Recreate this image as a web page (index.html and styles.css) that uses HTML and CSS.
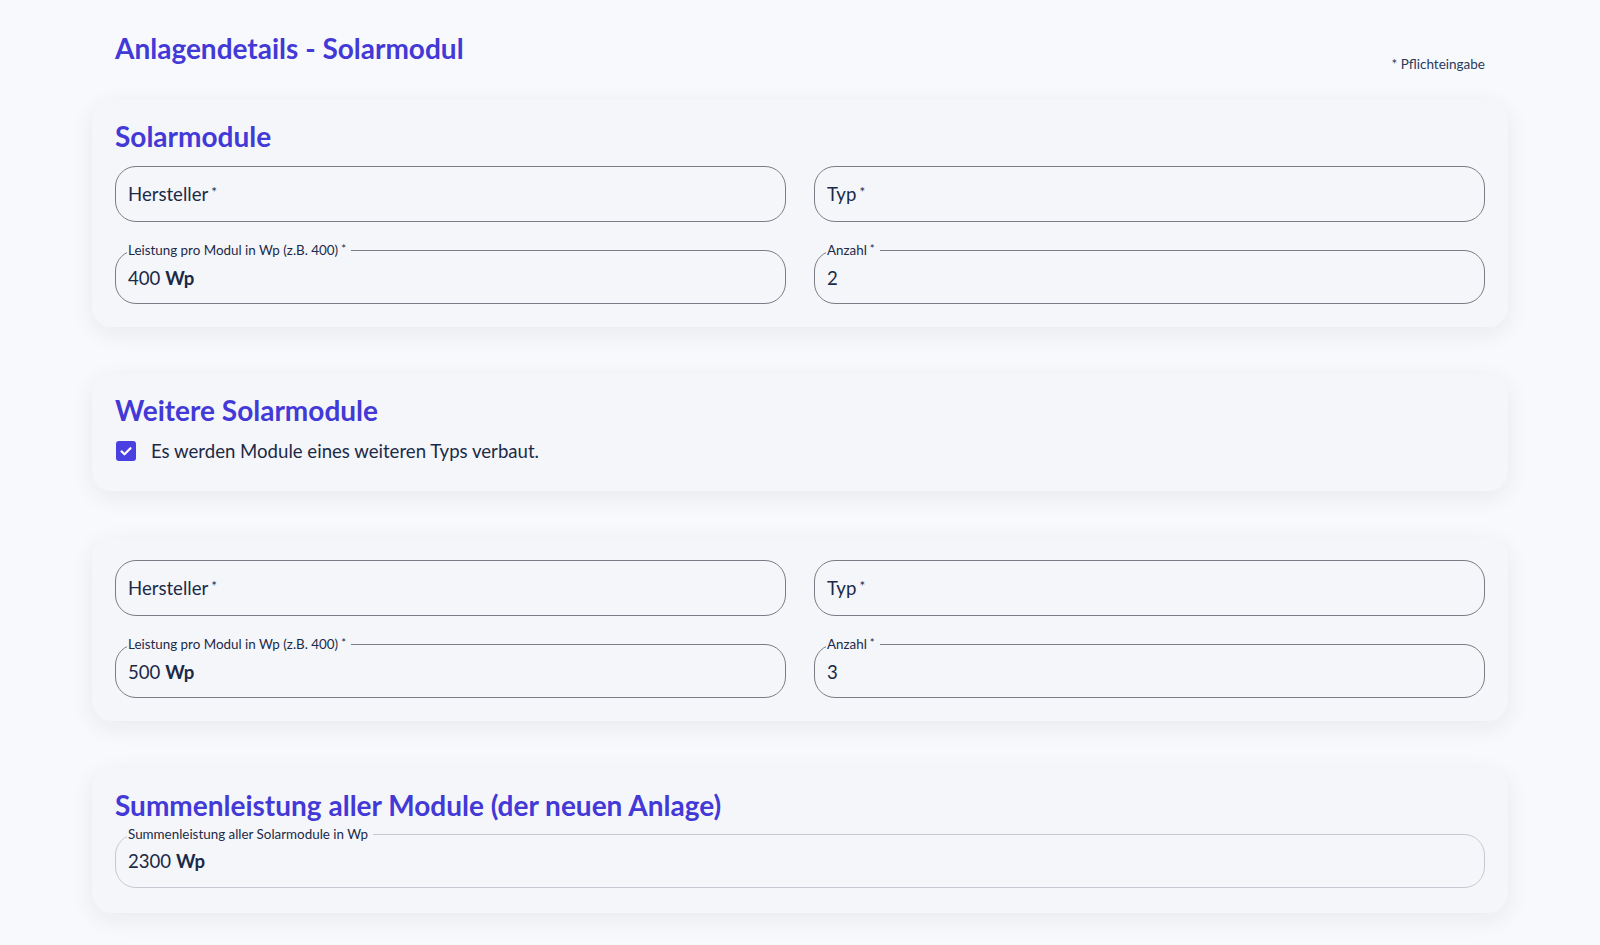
FILE: index.html
```html
<!DOCTYPE html>
<html lang="de">
<head>
<meta charset="utf-8">
<title>Anlagendetails - Solarmodul</title>
<link rel="stylesheet" href="styles.css">
</head>
<body>
<main class="page">
  <header class="page-head">
    <h1 class="page-title">Anlagendetails - Solarmodul</h1>
    <span class="required-note">* Pflichteingabe</span>
  </header>

  <section class="card card-modules">
    <h2 class="card-title">Solarmodule</h2>
    <div class="field-grid">
      <div class="field field-empty"><span class="placeholder">Hersteller<span class="req">*</span></span></div>
      <div class="field field-empty"><span class="placeholder">Typ<span class="req">*</span></span></div>
      <fieldset class="field field-filled">
        <legend>Leistung pro Modul in Wp (z.B. 400)<span class="req">*</span></legend>
        <span class="value">400 <b>Wp</b></span>
      </fieldset>
      <fieldset class="field field-filled">
        <legend>Anzahl<span class="req">*</span></legend>
        <span class="value">2</span>
      </fieldset>
    </div>
  </section>

  <section class="card card-extra">
    <h2 class="card-title">Weitere Solarmodule</h2>
    <label class="check">
      <span class="check-box">
        <svg viewBox="0 0 20 20" width="20" height="20"><path d="M5.5 10.4l3 2.9 6-6.1" fill="none" stroke="#fff" stroke-width="2.2" stroke-linecap="round" stroke-linejoin="round"/></svg>
      </span>
      <span class="check-text">Es werden Module eines weiteren Typs verbaut.</span>
    </label>
  </section>

  <section class="card card-second">
    <div class="field-grid">
      <div class="field field-empty"><span class="placeholder">Hersteller<span class="req">*</span></span></div>
      <div class="field field-empty"><span class="placeholder">Typ<span class="req">*</span></span></div>
      <fieldset class="field field-filled">
        <legend>Leistung pro Modul in Wp (z.B. 400)<span class="req">*</span></legend>
        <span class="value">500 <b>Wp</b></span>
      </fieldset>
      <fieldset class="field field-filled">
        <legend>Anzahl<span class="req">*</span></legend>
        <span class="value">3</span>
      </fieldset>
    </div>
  </section>

  <section class="card card-sum">
    <h2 class="card-title">Summenleistung aller Module (der neuen Anlage)</h2>
    <fieldset class="field field-filled field-disabled">
      <legend>Summenleistung aller Solarmodule in Wp</legend>
      <span class="value">2300 <b>Wp</b></span>
    </fieldset>
  </section>
</main>
</body>
</html>
```

FILE: styles.css
```css
* { box-sizing: border-box; }

html, body {
  margin: 0;
  background: #f8f9fc;
  font-family: "Lato", "Open Sans", sans-serif;
  color: #1b2a48;
}

.page {
  padding: 30px 92px 40px;
  display: flex;
  flex-direction: column;
  gap: 47px;
}

.page-head {
  display: flex;
  justify-content: space-between;
  align-items: flex-start;
  padding: 0 23px;
  height: 23px;
}

.page-title {
  margin: 0;
  font-size: 28px;
  font-weight: 700;
  color: #4339d6;
  line-height: 36px;
}

.required-note {
  font-size: 13.5px;
  margin-top: 26px;
  color: #2a3a5c;
}

.card {
  background: #f5f6f9;
  border-radius: 20px;
  box-shadow: 0 6px 24px rgba(20, 30, 60, 0.07);
  padding: 18px 23px 23px;
}

.card-title {
  margin: 0 0 12px;
  font-size: 28px;
  font-weight: 700;
  color: #4339d6;
  line-height: 36px;
}

.field-grid {
  display: grid;
  grid-template-columns: 1fr 1fr;
  column-gap: 28px;
  row-gap: 28px;
}

.field {
  margin: 0;
  min-width: 0;
  height: 56px;
  border: 1px solid #7a7d85;
  border-radius: 21px;
  padding: 0 12px;
  display: flex;
  align-items: center;
  font-size: 18.6px;
}

.field-filled {
  display: block;
  margin-top: -7px;
  height: 61px;
  padding: 0 12px;
}

.field-filled legend {
  font-size: 13.4px;
  padding: 0 5px 0 1px;
  margin-left: -1px;
  line-height: 14px;
  color: #1b2a48;
}

.field-filled .value {
  display: block;
  line-height: 40px;
  color: #1b2a48;
}

.value b { font-weight: 700; }

.req {
  font-size: 0.72em;
  margin-left: 3px;
  position: relative;
  top: -0.3em;
}

legend .req { font-size: 0.85em; top: -0.15em; }

.card-extra { padding-bottom: 29px; }

.check {
  display: flex;
  align-items: center;
  gap: 15px;
  padding-left: 1px;
}

.check-box {
  width: 20px;
  height: 20px;
  border-radius: 3px;
  background: #4a3fe0;
  display: flex;
  align-items: center;
  justify-content: center;
}

.check-text {
  font-size: 18.6px;
  color: #1b2a48;
}

.card-second { padding-top: 22px; }

.field-disabled {
  border-color: #c6c9d1;
}

.card-sum { padding-top: 19px; padding-bottom: 25px; }
.card-sum .card-title { margin-bottom: 11px; }
```
